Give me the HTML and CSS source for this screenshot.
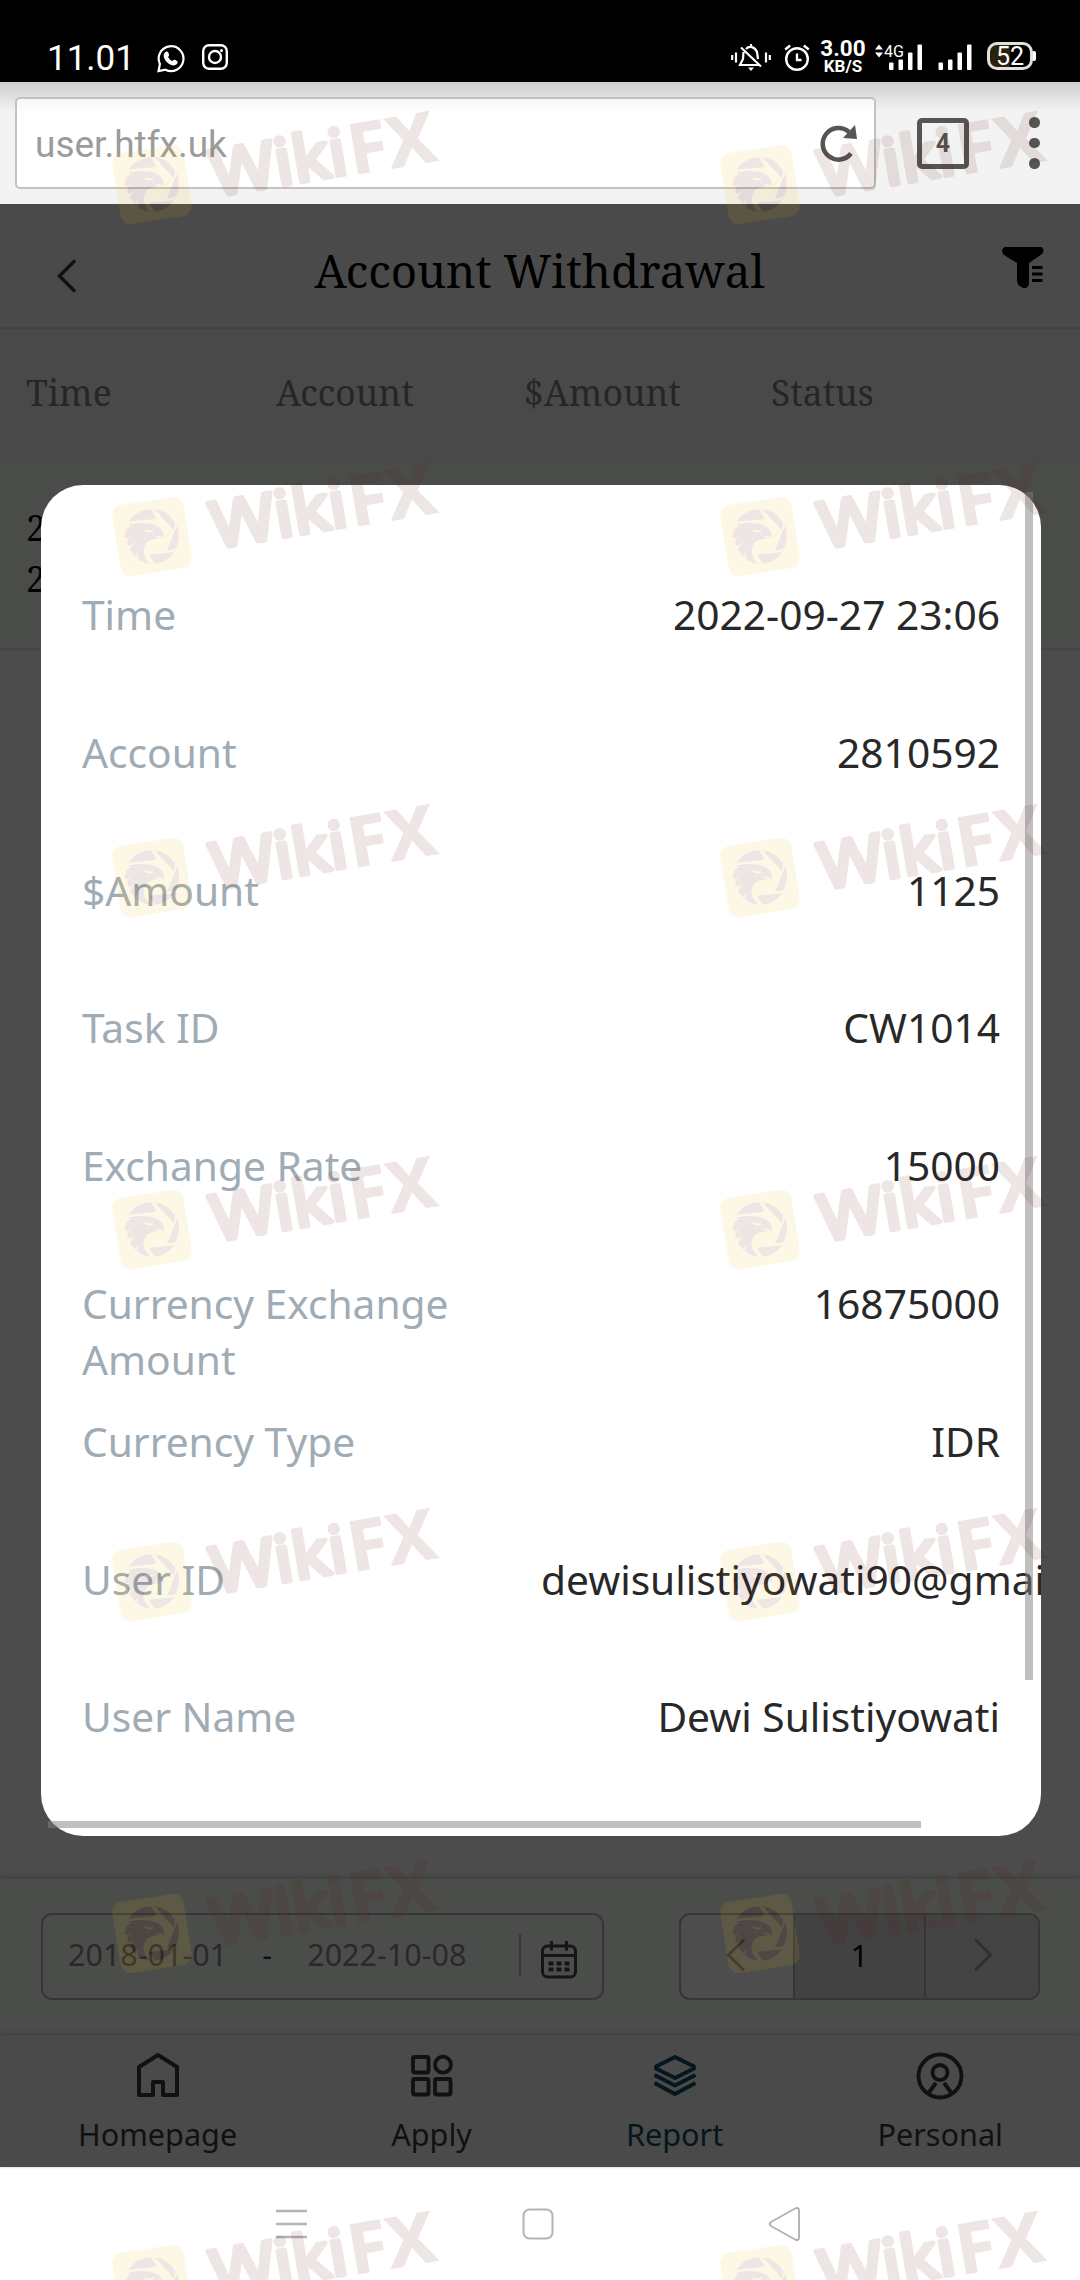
FILE: index.html
```html
<!DOCTYPE html>
<html lang="en">
<head>
    <meta charset="UTF-8">
    <meta name="viewport" content="width=device-width, initial-scale=1.0">
    <link rel="stylesheet" href="styles.css">
    <title>Account Withdrawal</title>
</head>
<body>
    <div class="phone">
        <div class="status">
            <span class="clock">11.01</span>
            <svg class="st-whatsapp" width="28" height="29" viewBox="0 0 28 29" fill="none" stroke="#fff" stroke-width="2.2">
                <path d="M1.500 27.200l1.400-7.200A12.400 12.400 0 1 1 8.500 25.700z"/>
                <path fill="#fff" stroke="none" d="M8.500 8c1.500-1 2.600-.4 3.200 1.600.6 1.800.4 2.200-.6 3.300 1 2 2.300 3.300 4.400 4.200 1.100-1.400 1.700-1.600 3.300-.8 2 1 2.200 1.500 1.500 3-1 2-3.300 2.600-6 1.700-3.600-1.300-6.200-4-7.300-7.400C6.300 11.400 6.700 9.300 8.500 8z"/>
            </svg>
            <svg class="st-insta" width="26" height="26" viewBox="0 0 26 26" fill="none" stroke="#fff" stroke-width="2.4">
                <rect x="1.200" y="1.200" width="23.600" height="23.600" rx="6"/>
                <circle cx="13" cy="13" r="6"/>
                <circle cx="19.500" cy="6.500" r="1.500" fill="#fff" stroke="none"/>
            </svg>
            <svg class="st-mute" width="40" height="27" viewBox="0 0 40 27" fill="none" stroke="#fff" stroke-width="2.2">
                <path d="M1.200 11v5M5 8.500v10M35 8.500v10M38.800 11v5"/>
                <path d="M15 5c3-3.500 9-2.500 11 3l1 7M12.500 8l-.5 7-3 6h19M10 3.500l20 19M20 0v3"/>
                <path d="M17 23.500h6L20 27z" fill="#fff" stroke="none"/>
            </svg>
            <svg class="st-alarm" width="26" height="27" viewBox="0 0 26 27" fill="none" stroke="#fff" stroke-width="2.400">
                <circle cx="13" cy="15" r="10.800"/>
                <path d="M13 9.500V16h4.500M1.200 5.500l5-4M24.800 5.500l-5-4"/>
            </svg>
            <div class="speed"><b>3.00</b><small>KB/S</small></div>
            <svg class="st-sig1" width="50" height="27" viewBox="0 0 50 27" fill="#fff">
                <path d="M1 5.500l4-5 4 5zM1 8.500l4 5 4-5z"/>
                <text x="10" y="12.500" font-size="17" textLength="20" lengthAdjust="spacingAndGlyphs">4G</text>
                <rect x="15" y="18.500" width="4.500" height="7.500" rx="1"/>
                <rect x="24.500" y="15.500" width="4.500" height="10.500" rx="1"/>
                <rect x="34" y="8.500" width="4.500" height="17.500" rx="1"/>
                <rect x="43.500" y="0.500" width="4.500" height="25.500" rx="1"/>
            </svg>
            <svg class="st-sig2" width="35" height="27" viewBox="0 0 35 27" fill="#fff">
                <rect x="0.500" y="18.500" width="4.500" height="7.500" rx="1"/>
                <rect x="10" y="15.500" width="4.500" height="10.500" rx="1"/>
                <rect x="19.500" y="8.500" width="4.500" height="17.500" rx="1"/>
                <rect x="29" y="0.500" width="4.500" height="25.500" rx="1"/>
            </svg>
            <div class="battery">52</div><i class="nub"></i>
        </div>

        <div class="browser">
            <div class="address">
                <span>user.htfx.uk</span>
                <svg width="38" height="38" viewBox="0 0 38 38" fill="none" stroke="#555" stroke-width="4.500">
                    <path d="M31 29.500A15.800 15.800 0 1 1 29 8"/>
                    <path d="M35 1l2 14-14-1z" fill="#555" stroke="none"/>
                </svg>
            </div>
            <div class="tabs">4</div>
            <div class="dots"><i></i><i></i><i></i></div>
        </div>

        <div class="page">
            <div class="header">
                <svg width="20" height="34" viewBox="0 0 20 34" fill="none" stroke="#0d1118" stroke-width="3.500"><path d="M18 1.500L2.500 17 18 32.500"/></svg>
                <h1>Account Withdrawal</h1>
                <svg width="42" height="42" viewBox="0 0 42 42">
                    <path d="M3 0h36c3 1 3 5 1 7L27 16v21c-1 4-4 5-6 4-4-2-6-4-6-7V16L2 8C-1 5 0 1 3 0z"/>
                    <path d="M30 20.500h10.500M30 27h10.500M30 33.500h10.500" stroke="#000" stroke-width="3"/>
                </svg>
            </div>
            <div class="thead">
                <span>Time</span><span>Account</span><span>$Amount</span><span>Status</span>
            </div>
            <div class="trow"><span>2022-09-27 23:06</span><span></span><span></span><b>.</b></div>
            <div class="empty"></div>
            <div class="filters">
                <div class="dates">
                    <span class="from">2018-01-01</span>
                    <span class="dash">-</span>
                    <span class="to">2022-10-08</span>
                    <i></i>
                    <svg width="36" height="38" viewBox="0 0 36 38" fill="none" stroke="#151515" stroke-width="3">
                        <rect x="1.500" y="5" width="33" height="31" rx="5"/>
                        <path d="M1.500 14.500h33M10.500 0v9.500M25.500 0v9.500"/>
                        <path d="M7.500 22.500h5M15.500 22.500h5M23.500 22.500h5M7.500 28.500h5M15.500 28.500h5M23.500 28.500h5" stroke-width="4"/>
                    </svg>
                </div>
                <div class="pager">
                    <span class="prev"><svg width="20" height="34" viewBox="0 0 20 34" fill="none" stroke="#303030" stroke-width="3"><path d="M18 1.500L2.500 17 18 32.500"/></svg></span>
                    <span class="num">1</span>
                    <span class="next"><svg width="20" height="34" viewBox="0 0 20 34" fill="none" stroke="#303030" stroke-width="3"><path d="M2 1.500L17.500 17 2 32.500"/></svg></span>
                </div>
            </div>
            <div class="tabbar">
                <div class="tab">
                    <svg width="44" height="48" viewBox="0 0 44 48" fill="none" stroke="#111" stroke-width="4" stroke-linejoin="round"><path d="M3 16L22 4l19 12v28H27V31H17v13H3z"/></svg>
                    <span>Homepage</span>
                </div>
                <div class="tab">
                    <svg width="44" height="48" viewBox="0 0 44 48" fill="none" stroke="#111" stroke-width="3.800">
                        <rect x="3" y="6" width="15.500" height="15.500" rx="1.500"/><circle cx="33" cy="13.700" r="8"/>
                        <rect x="3" y="28" width="15.500" height="15.500" rx="1.500"/><rect x="25" y="28" width="15.500" height="15.500" rx="1.500"/>
                    </svg>
                    <span>Apply</span>
                </div>
                <div class="tab active">
                    <svg width="44" height="48" viewBox="0 0 44 48" fill="none" stroke="#04161e" stroke-width="3.800" stroke-linejoin="round"><path d="M22 6l19 9.500v2L22 27 3 17.500v-2zM1.500 24L22 34.500 42.500 24M1.500 32L22 43l20.500-11"/></svg>
                    <span>Report</span>
                </div>
                <div class="tab">
                    <svg width="48" height="48" viewBox="0 0 48 48" fill="none" stroke="#111" stroke-width="3.800"><circle cx="24" cy="25" r="21.500"/><circle cx="24" cy="21.500" r="7.500"/><path d="M12.500 42l7.500-10M35.500 42L28 32"/></svg>
                    <span>Personal</span>
                </div>
            </div>

            <div class="modal">
                <div class="item"><label>Time</label><p>2022-09-27 23:06</p></div>
                <div class="item"><label>Account</label><p>2810592</p></div>
                <div class="item"><label>$Amount</label><p>1125</p></div>
                <div class="item"><label>Task ID</label><p>CW1014</p></div>
                <div class="item"><label>Exchange Rate</label><p>15000</p></div>
                <div class="item"><label>Currency Exchange Amount</label><p>16875000</p></div>
                <div class="item"><label>Currency Type</label><p>IDR</p></div>
                <div class="item"><label>User ID</label><p>dewisulistiyowati90@gmail</p></div>
                <div class="item"><label>User Name</label><p>Dewi Sulistiyowati</p></div>
            </div>
            <div class="scroll-y"></div>
            <div class="scroll-x"></div>
        </div>

        <div class="navbar">
            <svg width="32" height="30" viewBox="0 0 32 30" stroke="#b4b4b4" stroke-width="2.500"><path d="M0 2h31M0 15h31M0 28h31"/></svg>
            <svg width="32" height="32" viewBox="0 0 32 32" fill="none" stroke="#b4b4b4" stroke-width="2"><rect x="1.500" y="1.500" width="29" height="29" rx="6"/></svg>
            <svg width="34" height="36" viewBox="0 0 34 36" fill="none" stroke="#b4b4b4" stroke-width="2" stroke-linejoin="round"><path d="M3 16L27 2.500q4-1.500 4 2v27q0 3.500-4 2L3 20q-2.500-2 0-4z"/></svg>
        </div>

        <svg class="marks" width="1080" height="2280" viewBox="0 0 1080 2280">
            <defs>
                <!-- origin is the centre of the yellow tile -->
                <g id="mark">
                    <rect x="-36" y="-36" width="72" height="72" rx="10" fill="#ecbe1b" transform="rotate(-9)"/>
                    <g fill="#5a1c0a" transform="scale(.333) translate(-141 -139)">
                        <path d="M71 95A82 82 0 0 1 138 57l17 29z"/>
                        <path d="M149 57a82 82 0 0 1 61 40l-3 24z"/>
                        <path d="M216 106a82 82 0 0 1-4 70l-26 6z"/>
                        <path d="M207 186a82 82 0 0 1-58 35l-17-27z"/>
                        <path d="M58 140c2-14 8-26 20-34l-12-2c30-8 66-7 84 1 16 5 28 20 28 39-8-7-18-8-30-5 8 3 14 4 20 4-18 4-38 4-46 18-10 18-8 38 12 59-14-1-26-6-36-15v-20c-3 5-5 10-5 15-8-7-14-14-18-23l12-21-16 13c-3-7-4-14-4-20l12-12-13 7z"/>
                    </g>
                    <path fill="#ecbe1b" d="M-8-7l6 1 4-1c-1 4-8 4-10 0z"/>
                    <g class="mark-text" transform="rotate(-9.700)">
                        <text class="wiki" x="60" y="22.500" font-size="64" textLength="137" lengthAdjust="spacingAndGlyphs">Wiki</text>
                        <text x="199" y="24.500" font-size="70" textLength="88" lengthAdjust="spacingAndGlyphs">FX</text>
                    </g>
                </g>
            </defs>
            <use href="#mark" x="152" y="184.500"/><use href="#mark" x="760" y="184.500"/>
            <use href="#mark" x="152" y="536.500"/><use href="#mark" x="760" y="536.500"/>
            <use href="#mark" x="152" y="877.500"/><use href="#mark" x="760" y="877.500"/>
            <use href="#mark" x="152" y="1229.500"/><use href="#mark" x="760" y="1229.500"/>
            <use href="#mark" x="152" y="1581.500"/><use href="#mark" x="760" y="1581.500"/>
            <use href="#mark" x="152" y="1933.500"/><use href="#mark" x="760" y="1933.500"/>
            <use href="#mark" x="152" y="2284.500"/><use href="#mark" x="760" y="2284.500"/>
        </svg>
    </div>
</body>
</html>
```
FILE: styles.css
```css
* {
    box-sizing: border-box;
}

body {
    margin: 0;
    background: #fff;
    font-family: "Noto Sans", sans-serif;
}

h1, p {
    margin: 0;
    font-weight: normal;
}

svg {
    display: block;
    flex: none;
    overflow: visible;
}

.phone {
    position: relative;
    width: 1080px;
    height: 2280px;
    overflow: hidden;
    display: flex;
    flex-direction: column;
}

/* status bar */
.status {
    height: 82px;
    background: #000;
    color: #fff;
    display: flex;
    align-items: flex-start;
    padding: 44px 0 0 47px;
    font-family: Roboto, sans-serif;
}

.clock {
    width: 110px;
    font-size: 35px;
    line-height: 29px;
}

.st-insta {
    margin-left: 17px;
}

.st-mute {
    margin-left: 503px;
}

.st-alarm {
    margin-left: 13px;
}

.speed {
    width: 46px;
    margin: -5px 8px 0 10px;
    text-align: center;
}

.speed b, .speed small {
    display: block;
    font-weight: bold;
    font-size: 22.500px;
    line-height: 19px;
}

.speed small {
    font-size: 17px;
    line-height: 17px;
}

.st-sig2 {
    margin-left: 14px;
}

.battery {
    width: 46px;
    height: 28px;
    margin: -2px 0 0 14px;
    border: 3px solid #e2e0dc;
    border-radius: 10px;
    background: linear-gradient(90deg, #2b220c 50%, #000 50%);
    font-size: 25px;
    line-height: 23px;
    text-align: center;
}

.nub {
    width: 3px;
    height: 10px;
    margin-top: 7px;
    border-radius: 0 2px 2px 0;
    background: #fff;
}

/* browser bar */
.browser {
    height: 122px;
    background: linear-gradient(rgba(0,0,0,.15), rgba(0,0,0,0) 30px), #f3f3f3;
    display: flex;
    align-items: center;
    padding-left: 15px;
}

.address {
    width: 861px;
    height: 92px;
    border: 2px solid #c2c2c2;
    border-radius: 5px;
    background: linear-gradient(#f7f7f7, #fff 16px);
    display: flex;
    align-items: center;
    justify-content: space-between;
    padding: 0 16px 0 18px;
    font-family: Roboto, sans-serif;
    font-size: 37px;
    color: #9b9b9b;
}

.address span {
    padding-top: 2px;
}

.tabs {
    width: 52px;
    height: 51px;
    margin-left: 41px;
    border: 5px solid #555;
    border-radius: 5px;
    color: #555;
    font: bold 25px/42px Roboto, sans-serif;
    text-align: center;
}

.dots {
    margin-left: 60px;
    display: flex;
    flex-direction: column;
    gap: 10px;
}

.dots i {
    width: 10.500px;
    height: 10.500px;
    border-radius: 50%;
    background: #555;
}

/* page under the mask */
.page {
    position: relative;
    height: 1963px;
    background: #4c4c4c;
    display: flex;
    flex-direction: column;
}

.header {
    height: 125px;
    background: #4a4a4a;
    border-bottom: 2px solid #434343;
    display: flex;
    align-items: center;
    justify-content: space-between;
    padding: 8px 36px 0 57px;
}

.header svg:first-child {
    margin-top: 12px;
}

.header svg:last-child {
    margin-bottom: 4px;
}

.header h1 {
    font-family: "Noto Serif", "DejaVu Serif Condensed", "DejaVu Serif", serif;
    font-size: 45.700px;
    line-height: 60px;
    color: #000;
}

.thead {
    height: 135px;
    background: #494949;
    display: grid;
    grid-template-columns: 250px 248px 247px 1fr;
    padding: 38px 0 0 26px;
    font-family: "Noto Serif", "DejaVu Serif Condensed", "DejaVu Serif", serif;
    font-size: 35.500px;
    line-height: 50px;
    color: #262626;
}

.trow {
    height: 186px;
    background: #4a4c4a;
    border-bottom: 2px solid #454545;
    display: grid;
    grid-template-columns: 250px 248px 247px 266px;
    padding: 38px 0 0 26px;
    font-family: "Noto Serif", "DejaVu Serif Condensed", "DejaVu Serif", serif;
    font-size: 35.500px;
    line-height: 51px;
    color: #000;
}

.trow span {
    width: 200px;
}

.trow b {
    width: 256px;
    padding-left: 242px;
}

.empty {
    flex: 1;
}

.filters {
    height: 156px;
    background: #4b4d4b;
    box-shadow: 0 -2px 5px #414141;
    display: flex;
    align-items: center;
    justify-content: space-between;
    padding: 0 40px 2px 41px;
    font-size: 30.500px;
    color: #292929;
}

.dates {
    width: 563px;
    height: 87px;
    border: 2px solid #363636;
    border-radius: 11px;
    display: flex;
    align-items: center;
    padding: 0 25px;
}

.dates span {
    margin-top: -4px;
}

.dash {
    width: 80px;
    text-align: center;
    color: #0b0f17;
}

.dates i {
    width: 2px;
    height: 42px;
    margin: -2px 20px 0 auto;
    background: #363636;
}

.dates svg {
    margin-top: 8px;
}

.pager {
    width: 361px;
    height: 87px;
    border: 2px solid #363636;
    border-radius: 11px;
    background: #4d4d4d;
    display: grid;
    grid-template-columns: 112px 1fr 112px;
    overflow: hidden;
}

.pager span {
    display: flex;
    align-items: center;
    justify-content: center;
    padding-bottom: 3px;
}

.pager .prev {
    padding-right: 3px;
}

.pager .num {
    border: solid #363636;
    border-width: 0 2px;
    background: #424242;
    color: #000;
}

.pager .next {
    background: #444;
    padding-left: 2px;
}

.tabbar {
    height: 132px;
    background: #4a4a4a;
    box-shadow: 0 -2px 4px #404040;
    position: relative;
    display: flex;
    justify-content: space-around;
    padding: 16px 0 0 1px;
}

.tab {
    display: flex;
    flex-direction: column;
    align-items: center;
    gap: 14px;
    font-size: 30.600px;
    line-height: 42px;
    color: #111;
}

.active {
    color: #04161e;
}

/* detail popup */
.modal {
    position: absolute;
    left: 41px;
    top: 281px;
    width: 1000px;
    height: 1351px;
    padding: 101px 41px 0;
    border-radius: 42px;
    background: #fff;
    overflow: hidden;
    font-size: 40.700px;
    line-height: 56px;
}

.item {
    height: 137.800px;
    display: flex;
}

.item label, .item p {
    width: 50%;
    flex: none;
    color: #a0acb5;
}

.item p {
    color: #282828;
    text-align: right;
    white-space: nowrap;
}

.scroll-y, .scroll-x {
    position: absolute;
    background: rgba(127,127,127,.5);
}

.scroll-y {
    left: 1025px;
    top: 288px;
    width: 8px;
    height: 1188px;
}

.scroll-x {
    left: 48px;
    top: 1617px;
    width: 873px;
    height: 7px;
}

/* android buttons */
.navbar {
    height: 113px;
    background: #fff;
    display: flex;
    align-items: center;
    justify-content: space-between;
    padding: 0 278px 0 276px;
}

.marks {
    position: absolute;
    left: 0;
    top: 0;
    opacity: .11;
    pointer-events: none;
}

.mark-text {
    font-family: "Noto Sans", sans-serif;
    font-weight: bold;
    fill: #5a1c0a;
    stroke: #5a1c0a;
    stroke-linejoin: round;
}

.wiki {
    font-weight: normal;
    stroke-width: 5px;
}
```
